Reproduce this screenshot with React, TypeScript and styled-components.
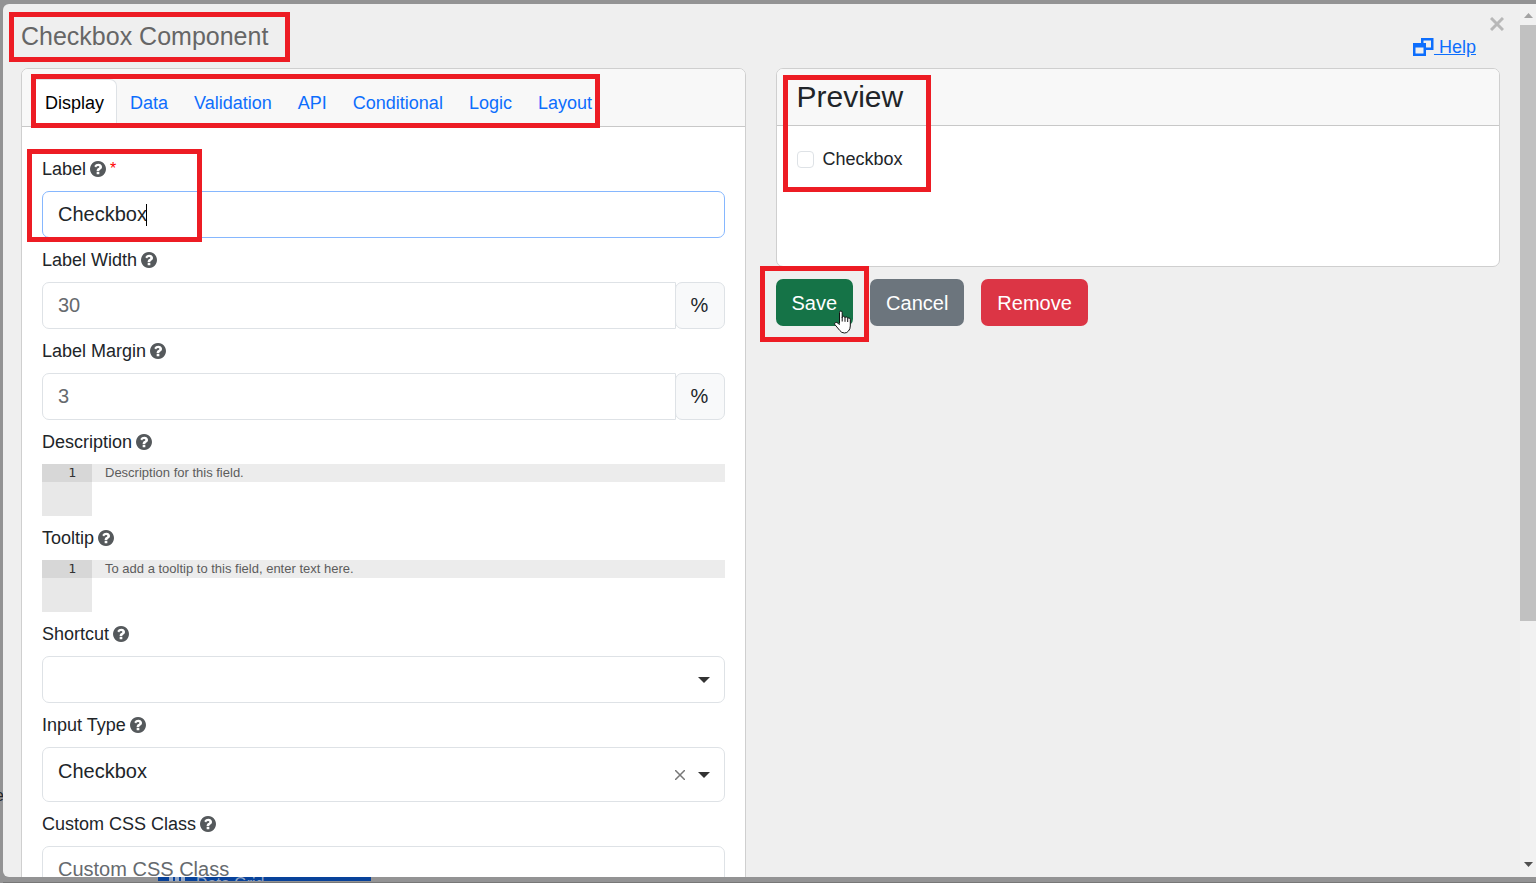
import React from "react";
import styled, { createGlobalStyle, css } from "styled-components";

const GlobalStyle = createGlobalStyle`
  *, *::before, *::after { box-sizing: border-box; }
  body {
    margin: 0;
    background: #939394;
    color: #212529;
    font-family: "Liberation Sans", Arial, sans-serif;
    font-size: 18px;
    line-height: 26px;
  }
  button, input, select, textarea { font: inherit; color: inherit; }
`;

const Page = styled.div`
  display: flex;
  flex-direction: column;
  height: 100vh;
  padding: 4px 0 0 3px;
  overflow: hidden;
  position: relative;
`;

const Dialog = styled.div`
  display: flex;
  flex: 1;
  min-height: 0;
  position: relative;
  overflow: hidden;
  background: #efefef;
  border-radius: 6px 0 0 6px;
`;

const DialogBody = styled.div`
  flex: 1;
  min-width: 0;
  padding: 0 20px 20px 18px;
  overflow-y: auto;
  scrollbar-width: none;
`;

const DialogHeader = styled.header`
  display: flex;
  justify-content: space-between;
  align-items: flex-start;
  height: 64px;
  padding: 16px 24px 0 0;
`;

const Title = styled.h1`
  position: relative;
  margin: 0;
  color: #666;
  font-size: 25px;
  font-weight: 400;
  line-height: 32px;
`;

const HelpLink = styled.a`
  align-self: flex-end;
  display: flex;
  align-items: center;
  margin-bottom: 8px;
  color: #0d6efd;
  white-space: pre;
`;

const CloseButton = styled.button`
  position: absolute;
  top: 12px;
  right: 31px;
  display: flex;
  padding: 1px;
  border: 0;
  background: none;
`;

const Columns = styled.div`
  display: grid;
  grid-template-columns: 1fr 1fr;
  align-items: start;
  gap: 30px;
`;

const Card = styled.section`
  border: 1px solid #cfcfcf;
  border-radius: 7px;
  background: #fff;
`;

const cardHeader = css`
  border-bottom: 1px solid #c8c8c8;
  border-radius: 6px 6px 0 0;
  background: #f8f8f8;
`;

const TabHeader = styled.div`
  ${cardHeader}
  display: flex;
  height: 58px;
  padding: 10px 9px 0;
`;

const TabList = styled.nav`
  position: relative;
  display: flex;
  height: 48px;
`;

const Tab = styled.a<{ $active?: boolean }>`
  padding: 11px 13px;
  border-radius: 7px 7px 0 0;
  color: #0d6efd;
  text-decoration: none;
  ${(p) =>
    p.$active &&
    css`
      padding: 10px 12px 10px 13px;
      border: 1px solid #dee2e6;
      border-bottom: 0;
      background: #fff;
      color: #000;
    `}
`;

const PreviewHeader = styled.div`
  ${cardHeader}
  height: 57px;
  padding: 10px 20px;
`;

const PreviewTitle = styled.h2`
  margin: 0;
  font-size: 30px;
  font-weight: 400;
  line-height: 36px;
`;

const PreviewBody = styled.div`
  min-height: 140px;
  padding: 20px;
`;

const PreviewItem = styled.div`
  position: relative;
  display: inline-flex;
`;

const CheckLabel = styled.label`
  display: inline-flex;
  align-items: center;
  gap: 9px;
`;

const CheckInput = styled.input`
  appearance: none;
  width: 17px;
  height: 17px;
  margin: 0;
  border: 1px solid #dee2e6;
  border-radius: 4px;
  background: #fff;
`;

const Form = styled.form`
  display: flex;
  flex-direction: column;
  gap: 9px;
  padding: 29px 20px 20px;
`;

const Field = styled.div`
  position: relative;
  display: flex;
  flex-direction: column;
  gap: 9px;
`;

const FieldLabel = styled.label`
  display: flex;
  align-items: center;
  gap: 4px;
`;

const Required = styled.span`
  color: #f00;
  font-size: 16px;
`;

const Control = styled.div`
  position: relative;
  display: flex;
`;

const box = css`
  flex: 1;
  min-width: 0;
  border: 1px solid #dee2e6;
  border-radius: 7px;
  background: #fff;
  font-size: 20px;
  line-height: 30px;
  outline: none;
`;

const TextInput = styled.input<{ $focused?: boolean; $joined?: boolean }>`
  ${box}
  height: 47px;
  padding: 0 15px;
  border-color: ${(p) => (p.$focused ? "#86b7fe" : "#dee2e6")};
  ${(p) =>
    p.$joined &&
    css`
      border-radius: 7px 0 0 7px;
    `}
  &::placeholder {
    color: #666a6e;
    opacity: 1;
  }
`;

const TextCaret = styled.span`
  position: absolute;
  top: 13px;
  left: 104px;
  width: 1px;
  height: 22px;
  background: #000;
`;

const Addon = styled.span`
  width: 50px;
  margin-left: -1px;
  border: 1px solid #dee2e6;
  border-radius: 7px;
  background: #f8f9fa;
  font-size: 20px;
  line-height: 45px;
  text-align: center;
`;

const Select = styled.select<{ $tall?: boolean }>`
  ${box}
  appearance: none;
  height: ${(p) => (p.$tall ? 55 : 47)}px;
  padding: 0 60px ${(p) => (p.$tall ? 7 : 0)}px 15px;
`;

const SelectIcons = styled.span`
  position: absolute;
  top: 0;
  right: 15px;
  bottom: 0;
  display: flex;
  align-items: center;
  gap: 13px;
  pointer-events: none;
`;

const ClearButton = styled.button`
  display: flex;
  padding: 0;
  border: 0;
  background: none;
  pointer-events: auto;
`;

const Editor = styled.div`
  display: flex;
  height: 52px;
`;

const Gutter = styled.div`
  width: 50px;
  background: #e8e8e8;
  color: #333;
  font-family: "DejaVu Sans Mono", monospace;
  font-size: 13px;
  line-height: 18px;
  text-align: right;
`;

const GutterLine = styled.div`
  padding-right: 16px;
  background: #d7d7d7;
`;

const EditorText = styled.textarea`
  flex: 1;
  min-width: 0;
  padding: 0 13px;
  border: 0;
  background: linear-gradient(#ececec 18px, #fff 18px);
  font-size: 13px;
  line-height: 17px;
  resize: none;
  outline: none;
  &::placeholder {
    color: #5c5c5c;
    opacity: 1;
  }
`;

const Actions = styled.div`
  display: flex;
  gap: 17px;
  margin-top: 12px;
`;

const ActionSlot = styled.div`
  position: relative;
`;

const ActionButton = styled.button<{ $color: string }>`
  height: 47px;
  padding: 0 16px;
  border: 0;
  border-radius: 7px;
  background: ${(p) => p.$color};
  color: #fff;
  font-size: 20px;
`;

const Highlight = styled.span<{ $inset: string; $width?: string }>`
  position: absolute;
  z-index: 2;
  inset: ${(p) => p.$inset};
  width: ${(p) => p.$width ?? "auto"};
  border: 5px solid #ed1c24;
  pointer-events: none;
`;

const Pointer = styled.svg`
  position: absolute;
  z-index: 3;
  right: 1px;
  bottom: -8px;
`;

const ScrollTrack = styled.div`
  display: flex;
  flex-direction: column;
  width: 16px;
  background: #f1f1f1;
`;

const ScrollArrow = styled.svg`
  flex: none;
  width: 16px;
  height: 21px;
`;

const ScrollRange = styled.div`
  display: grid;
  flex: 1;
  grid-template-rows: 33fr 13fr;
`;

const ScrollThumb = styled.div`
  background: #c1c1c1;
`;

const Underlay = styled.div`
  display: flex;
  height: 6px;
  padding-left: 155px;
  border-bottom: 1px solid #777;
  overflow: hidden;
`;

const UnderlayButton = styled.div`
  display: flex;
  gap: 11px;
  width: 213px;
  height: 4px;
  padding-left: 11px;
  overflow: hidden;
  background: #08429a;
  color: #94a7c5;
  font-size: 16px;
  line-height: 14px;
`;

const EdgeText = styled.span`
  position: absolute;
  top: 783px;
  left: -5px;
  font-size: 16px;
`;

const GridGlyph = () => (
  <svg width="16" height="16" viewBox="0 0 16 16" fill="currentColor">
    <path d="M0 0h4v4H0zM6 0h4v4H6zM12 0h4v4h-4zM0 6h4v4H0zM6 6h4v4H6zM12 6h4v4h-4z" />
  </svg>
);

const QuestionIcon = () => (
  <svg width="16" height="16" viewBox="128 128 1536 1536" fill="#55595c" aria-hidden="true">
    <path d="M1024 1376v-192q0-14-9-23t-23-9H800q-14 0-23 9t-9 23v192q0 14 9 23t23 9h192q14 0 23-9t9-23zm256-672q0-88-55-163T1086 425t-170-41q-243 0-371 213-15 24 8 42l132 100q7 6 19 6 16 0 25-12 53-68 86-92 34-24 86-24 48 0 85 26t38 59q0 38-20 61t-68 45q-63 28-115 86T768 1020v36q0 14 9 23t23 9h192q14 0 23-9t9-23q0-19 21-49T1100 957q32-18 49-28t46-35 44-48 28-60 13-82zm384 192q0 209-103 385T1281 1561 896 1664t-385-103T231 1281 128 896t103-385T511 231 896 128t385 103T1561 511 1664 896z" />
  </svg>
);

const WindowsIcon = () => (
  <svg width="21" height="18" viewBox="0 0 42 36" stroke="currentColor" strokeWidth="5" aria-hidden="true">
    <path d="M18.500 2.500h20v19h-20z" fill="none" />
    <path d="M2.500 12.500h21v21h-21z" fill="#efefef" />
    <path d="M0 14.500h26" strokeWidth="9" />
  </svg>
);

const CaretIcon = () => (
  <svg width="12" height="6" viewBox="0 0 12 6" fill="#333" aria-hidden="true">
    <path d="M0 0h12L6 6z" />
  </svg>
);

const tabs = ["Display", "Data", "Validation", "API", "Conditional", "Logic", "Layout"];

interface FieldRowProps {
  id: string;
  label: string;
  required?: boolean;
  children: React.ReactNode;
}

const FieldRow = ({ id, label, required, children }: FieldRowProps) => (
  <Field>
    <FieldLabel htmlFor={id}>
      {label}
      <QuestionIcon />
      {required && <Required>*</Required>}
    </FieldLabel>
    {children}
  </Field>
);

const CodeField = ({ id, placeholder }: { id: string; placeholder: string }) => (
  <Editor>
    <Gutter>
      <GutterLine>1</GutterLine>
    </Gutter>
    <EditorText id={id} placeholder={placeholder} />
  </Editor>
);

export default function App() {
  return (
    <Page>
      <GlobalStyle />
      <EdgeText aria-hidden="true">e</EdgeText>
      <Dialog role="dialog" aria-labelledby="dialog-title">
        <DialogBody>
          <DialogHeader>
            <Title id="dialog-title">
              Checkbox Component
              <Highlight $inset="-8px -22px -10px -12px" />
            </Title>
            <HelpLink href="#help">
              <WindowsIcon />
              {" Help"}
            </HelpLink>
          </DialogHeader>
          <Columns>
            <Card>
              <TabHeader>
                <TabList>
                  {tabs.map((name, i) => (
                    <Tab key={name} href={`#${name.toLowerCase()}`} $active={i === 0}>
                      {name}
                    </Tab>
                  ))}
                  <Highlight $inset="-5px 5px -1px 0" />
                </TabList>
              </TabHeader>
              <Form>
                <FieldRow id="label" label="Label" required>
                  <Control>
                    <TextInput id="label" defaultValue="Checkbox" $focused />
                    <TextCaret />
                  </Control>
                  <Highlight $inset="-7px auto -4px -15px" $width="175px" />
                </FieldRow>
                <FieldRow id="label-width" label="Label Width">
                  <Control>
                    <TextInput id="label-width" placeholder="30" $joined />
                    <Addon>%</Addon>
                  </Control>
                </FieldRow>
                <FieldRow id="label-margin" label="Label Margin">
                  <Control>
                    <TextInput id="label-margin" placeholder="3" $joined />
                    <Addon>%</Addon>
                  </Control>
                </FieldRow>
                <FieldRow id="description" label="Description">
                  <CodeField id="description" placeholder="Description for this field." />
                </FieldRow>
                <FieldRow id="tooltip" label="Tooltip">
                  <CodeField id="tooltip" placeholder="To add a tooltip to this field, enter text here." />
                </FieldRow>
                <FieldRow id="shortcut" label="Shortcut">
                  <Control>
                    <Select id="shortcut">
                      <option value="" />
                    </Select>
                    <SelectIcons>
                      <CaretIcon />
                    </SelectIcons>
                  </Control>
                </FieldRow>
                <FieldRow id="input-type" label="Input Type">
                  <Control>
                    <Select id="input-type" $tall>
                      <option>Checkbox</option>
                      <option>Radio</option>
                    </Select>
                    <SelectIcons>
                      <ClearButton type="button" aria-label="Clear">
                        <svg width="10" height="10" viewBox="0 0 20 20" stroke="#777" strokeWidth="3">
                          <path d="M0 0l20 20M20 0L0 20" />
                        </svg>
                      </ClearButton>
                      <CaretIcon />
                    </SelectIcons>
                  </Control>
                </FieldRow>
                <FieldRow id="css-class" label="Custom CSS Class">
                  <Control>
                    <TextInput id="css-class" placeholder="Custom CSS Class" />
                  </Control>
                </FieldRow>
              </Form>
            </Card>
            <div>
              <Card>
                <PreviewHeader>
                  <PreviewTitle>Preview</PreviewTitle>
                </PreviewHeader>
                <PreviewBody>
                  <PreviewItem>
                    <CheckLabel>
                      <CheckInput type="checkbox" />
                      Checkbox
                    </CheckLabel>
                    <Highlight $inset="-71px -28px -20px -14px" />
                  </PreviewItem>
                </PreviewBody>
              </Card>
              <Actions>
                <ActionSlot>
                  <ActionButton type="button" $color="#157347">Save</ActionButton>
                  <Highlight $inset="-13px -16px -16px -16px" />
                  <Pointer width="19" height="24" viewBox="0 0 19 24" fill="#fff" stroke="#111" strokeWidth="1" strokeLinejoin="round">
                    <path d="M6.500 13.500V2.500Q6.500 1 7.800 1T9.200 2.500V7.500Q9.300 6.300 10.500 6.300T12 7.800Q12.200 6.900 13.300 6.900T14.700 8.500Q15 7.800 16 7.900T17.300 9.500V16Q17.300 19 15.500 21Q14 23 11.500 23Q8.500 23 6.800 20.500L1.800 14.500Q1.300 13 2.600 12.500T5 13.200L6.500 14.800" />
                    <path d="M9.200 7v4.500M12 7.800v4M14.700 8.500v3.500" fill="none" />
                  </Pointer>
                </ActionSlot>
                <ActionButton type="button" $color="#6c757d">Cancel</ActionButton>
                <ActionButton type="button" $color="#dc3545">Remove</ActionButton>
              </Actions>
            </div>
          </Columns>
        </DialogBody>
        <CloseButton type="button" aria-label="Close">
          <svg width="14" height="14" viewBox="0 0 14 14" stroke="#b8b8b8" strokeWidth="3">
            <path d="M1 1l12 12M13 1L1 13" />
          </svg>
        </CloseButton>
        <ScrollTrack aria-hidden="true">
          <ScrollArrow viewBox="0 0 16 21" fill="#a3a3a3">
            <path d="M4 14h9L8.500 9z" />
          </ScrollArrow>
          <ScrollRange>
            <ScrollThumb />
          </ScrollRange>
          <ScrollArrow viewBox="0 0 16 21" fill="#505050">
            <path d="M4 6h9L8.500 11z" />
          </ScrollArrow>
        </ScrollTrack>
      </Dialog>
      <Underlay aria-hidden="true">
        <UnderlayButton>
          <GridGlyph />
          Data Grid
        </UnderlayButton>
      </Underlay>
    </Page>
  );
}
